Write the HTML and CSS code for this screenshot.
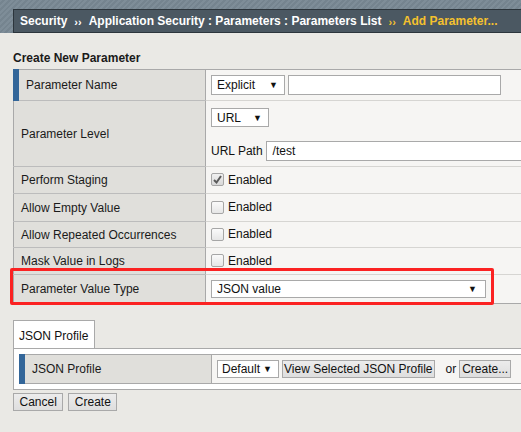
FILE: index.html
```html
<!DOCTYPE html>
<html>
<head>
<meta charset="utf-8">
<link rel="stylesheet" href="styles.css">
</head>
<body>
<div class="topbar">
  <div class="crumb">
    <span>Security</span><span class="sep">&rsaquo;&rsaquo;</span><span>Application Security : Parameters : Parameters List</span><span class="sep cur">&rsaquo;&rsaquo;</span><span class="cur">Add Parameter...</span>
  </div>
</div>
<div class="main">
  <div class="title">Create New Parameter</div>
  <div class="formwrap">
    <table class="form">
      <colgroup><col class="c1"><col class="c2"></colgroup>
      <tr class="r1">
        <td class="lbl first"><span class="mark"></span>Parameter Name</td>
        <td class="val">
          <div class="line">
            <span class="sel w74">Explicit<span class="arr">&#9660;</span></span>
            <span class="txt w213"></span>
          </div>
        </td>
      </tr>
      <tr class="r2">
        <td class="lbl">Parameter Level</td>
        <td class="val">
          <div class="lvl">
            <span class="sel w58">URL<span class="arr">&#9660;</span></span>
            <div class="line path">URL Path <span class="txt wide">/test</span></div>
          </div>
        </td>
      </tr>
      <tr class="r3">
        <td class="lbl">Perform Staging</td>
        <td class="val"><span class="chk on"><svg viewBox="0 0 13 13" width="13" height="13"><path d="M3 7 L5.5 9.5 L10 3" fill="none" stroke="#5a5a5a" stroke-width="2"/></svg></span>Enabled</td>
      </tr>
      <tr class="r4">
        <td class="lbl">Allow Empty Value</td>
        <td class="val"><span class="chk"></span>Enabled</td>
      </tr>
      <tr class="r5">
        <td class="lbl">Allow Repeated Occurrences</td>
        <td class="val"><span class="chk"></span>Enabled</td>
      </tr>
      <tr class="r6">
        <td class="lbl">Mask Value in Logs</td>
        <td class="val"><span class="chk"></span>Enabled</td>
      </tr>
      <tr class="r7">
        <td class="lbl">Parameter Value Type</td>
        <td class="val"><span class="sel w275">JSON value<span class="arr">&#9660;</span></span></td>
      </tr>
    </table>
    <div class="redbox"></div>
  </div>

  <div class="tabs">
    <div class="tab">JSON Profile</div>
  </div>
  <div class="panel">
    <table class="form inner">
      <colgroup><col class="ic1"><col class="c2"></colgroup>
      <tr>
        <td class="lbl first ilbl"><span class="mark"></span>JSON Profile</td>
        <td class="val">
          <div class="line">
            <span class="sel w62">Default<span class="arr">&#9660;</span></span>
            <span class="btn view">View Selected JSON Profile</span>
            <span class="or">or</span>
            <span class="btn">Create...</span>
          </div>
        </td>
      </tr>
    </table>
  </div>
  <div class="actions">
    <span class="btn big">Cancel</span>
    <span class="btn big">Create</span>
  </div>
</div>
</body>
</html>
```
FILE: styles.css
```css
html, body {
  margin: 0;
  padding: 0;
}
body {
  background: #eae9e5;
  font-family: "Liberation Sans", Arial, sans-serif;
  font-size: 12px;
  color: #222;
  width: 521px;
  height: 432px;
  overflow: hidden;
}
.topbar {
  height: 33px;
  padding: 9px 0 0 13px;
  box-sizing: border-box;
  background: repeating-linear-gradient(135deg, #7e8d98 0px, #7e8d98 2px, #75848f 2px, #75848f 4px);
}
.crumb {
  height: 24px;
  width: 560px;
  box-sizing: border-box;
  background: #4b5862;
  border: 1px solid #2c353c;
  border-right: none;
  color: #fff;
  font-weight: bold;
  font-size: 12px;
  line-height: 22px;
  padding-left: 6px;
  white-space: nowrap;
}
.crumb .sep {
  font-size: 11px;
  margin: 0 7px 0 7px;
  position: relative;
  top: 1px;
}
.crumb .cur {
  color: #f5c12e;
}
.main {
  padding: 0 0 0 13px;
}
.title {
  font-weight: bold;
  color: #1a1a1a;
  margin-top: 18px;
  height: 18px;
  line-height: 14px;
}
.formwrap {
  position: relative;
}
.form {
  border-collapse: collapse;
  width: 560px;
  table-layout: fixed;
}
.c1 { width: 192px; }
.ic1 { width: 192px; }
.form td {
  padding: 0;
  vertical-align: middle;
  white-space: nowrap;
}
.form .lbl {
  background: #e0dfdb;
  border: 1px solid #a9a9a9;
  border-top-color: #bcbcbc;
  border-bottom-color: #bcbcbc;
  padding-left: 7px;
  color: #1a1a1a;
  position: relative;
}
.form tr:first-child .lbl {
  border-top-color: #a9a9a9;
}
.form .lbl.first {
  padding-left: 12px;
}
.form .mark {
  position: absolute;
  left: -1px;
  top: -1px;
  bottom: -1px;
  width: 6px;
  background: #336699;
}
.form .val {
  background: #f6f5f3;
  border-top: 1px solid #d6d5d2;
  border-bottom: 1px solid #d6d5d2;
  padding-left: 5px;
  color: #111;
  font-size: 12px;
}
.form tr:first-child .val {
  border-top-color: #a9a9a9;
}
.form tr:last-child .val {
  border-bottom-color: #a9a9a9;
}
.r1 td { height: 30px; }
.r2 td { height: 65px; }
.r3 td { height: 26px; }
.r4 td { height: 27px; }
.r5 td { height: 25px; }
.r6 td { height: 26px; }
.r7 td { height: 28px; }
.line {
  display: flex;
  align-items: center;
  gap: 3px;
}
.sel {
  display: inline-flex;
  align-items: center;
  justify-content: space-between;
  box-sizing: border-box;
  height: 20px;
  background: #fff;
  border: 1px solid #a9a9a9;
  padding: 0 6px 0 5px;
  font-size: 12px;
  color: #111;
}
.sel .arr {
  font-size: 9px;
  color: #111;
}
.w74 { width: 74px; }
.w58 { width: 58px; height: 19px; }
.w62 { width: 62px; height: 18px; padding-left: 4px; }
.w275 { width: 275px; height: 18px; padding-right: 8px; }
.txt {
  display: inline-block;
  box-sizing: border-box;
  height: 20px;
  background: #fff;
  border: 1px solid #a9a9a9;
  font-size: 12px;
  line-height: 18px;
  padding-left: 6px;
}
.w213 { width: 213px; }
.wide { width: 280px; }
.lvl {
  display: flex;
  flex-direction: column;
  align-items: flex-start;
  gap: 14px;
  padding-top: 2px;
}
.path {
  gap: 3px;
  font-size: 12px;
}
.chk {
  display: inline-block;
  vertical-align: middle;
  box-sizing: border-box;
  width: 13px;
  height: 13px;
  border: 1px solid #a6a6a6;
  border-radius: 2px;
  background: linear-gradient(#fafafa, #e6e6e6);
  margin-right: 4px;
  position: relative;
  top: -1px;
}
.chk.on {
  background: linear-gradient(#f0f0f0, #d8d8d8);
}
.chk svg {
  position: absolute;
  left: -1px;
  top: -1px;
}
.redbox {
  position: absolute;
  left: -3px;
  top: 199px;
  width: 484px;
  height: 37px;
  box-sizing: border-box;
  border: 3px solid #fb2222;
  border-radius: 2px;
}
.tabs {
  margin-top: 16px;
  display: flex;
}
.tab {
  background: #fff;
  border: 1px solid #a9a9a9;
  border-bottom: none;
  width: 82px;
  height: 28px;
  box-sizing: border-box;
  padding-left: 5px;
  line-height: 30px;
  font-size: 12px;
  color: #111;
  white-space: nowrap;
}
.panel {
  background: #fff;
  border: 1px solid #a9a9a9;
  border-right: none;
  padding: 5px 0 5px 5px;
  width: 560px;
  box-sizing: border-box;
}
.inner {
  width: 560px;
}
.inner td {
  height: 28px;
}
.inner .ilbl {
  padding-left: 12px;
  font-size: 12px;
  border-color: #a9a9a9;
}
.inner .val {
  border-color: #a9a9a9;
}
.btn {
  display: inline-flex;
  align-items: center;
  box-sizing: border-box;
  height: 18px;
  padding: 0 2px;
  background: linear-gradient(#ececec, #dedede);
  border: 1px solid #a9a9a9;
  font-size: 12px;
  color: #111;
  white-space: nowrap;
}
.btn.view {
  padding: 0 1px;
}
.or {
  margin: 0 0 0 8px;
  font-size: 12px;
}
.actions {
  margin-top: 3px;
  display: flex;
  gap: 5px;
}
.btn.big {
  padding: 0 5.5px;
}
```
